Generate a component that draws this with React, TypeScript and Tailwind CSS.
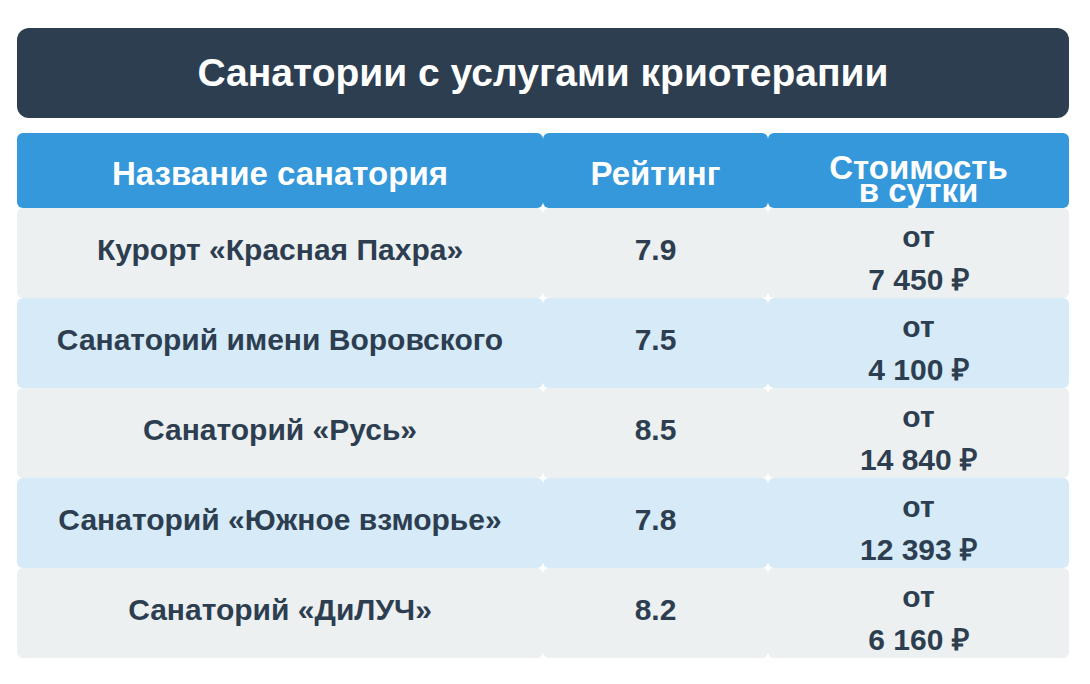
const rows = [
  { name: "Курорт «Красная Пахра»", rating: "7.9", price: "7 450 ₽" },
  { name: "Санаторий имени Воровского", rating: "7.5", price: "4 100 ₽" },
  { name: "Санаторий «Русь»", rating: "8.5", price: "14 840 ₽" },
  { name: "Санаторий «Южное взморье»", rating: "7.8", price: "12 393 ₽" },
  { name: "Санаторий «ДиЛУЧ»", rating: "8.2", price: "6 160 ₽" },
]

export default function App() {
  return (
    <div
      className="w-[1090px] h-[684px] bg-white pl-[17px] pt-[28px]"
      style={{ fontFamily: '"Liberation Sans", Arial, sans-serif' }}
    >
      <div className="w-[1052px] h-[90px] rounded-[12px] bg-[#2c3e50] flex items-center justify-center">
        <h1 className="text-[39px] font-bold text-white">Санатории с услугами криотерапии</h1>
      </div>

      <div className="mt-[15px] w-[1052px] grid grid-cols-[526px_225px_301px] font-bold">
        {/* header */}
        <div className="h-[75px] rounded-[6px] bg-[#3498db] flex items-center justify-center pt-[6px] text-white text-[33px]">
          Название санатория
        </div>
        <div className="h-[75px] rounded-[6px] bg-[#3498db] flex items-center justify-center pt-[6px] text-white text-[33px]">
          Рейтинг
        </div>
        <div className="h-[75px] rounded-[6px] bg-[#3498db] flex flex-col items-center justify-center text-white text-[33px] leading-[23px] pt-[16px]">
          <span>Стоимость</span>
          <span>в сутки</span>
        </div>

        {rows.map((r, i) => {
          const bg = i % 2 === 0 ? "bg-[#ecf0f1]" : "bg-[#d6eaf8]"
          return (
            <div key={r.name} className="contents text-[#2c3e50] text-[30px]">
              <div className={`h-[90px] rounded-[6px] ${bg} flex items-center justify-center pb-[7px]`}>
                {r.name}
              </div>
              <div className={`h-[90px] rounded-[6px] ${bg} flex items-center justify-center pb-[7px]`}>
                {r.rating}
              </div>
              <div className={`h-[90px] rounded-[6px] ${bg} flex flex-col items-center justify-center leading-[43px] pt-[10px]`}>
                <span>от</span>
                <span>{r.price}</span>
              </div>
            </div>
          )
        })}
      </div>
    </div>
  )
}
